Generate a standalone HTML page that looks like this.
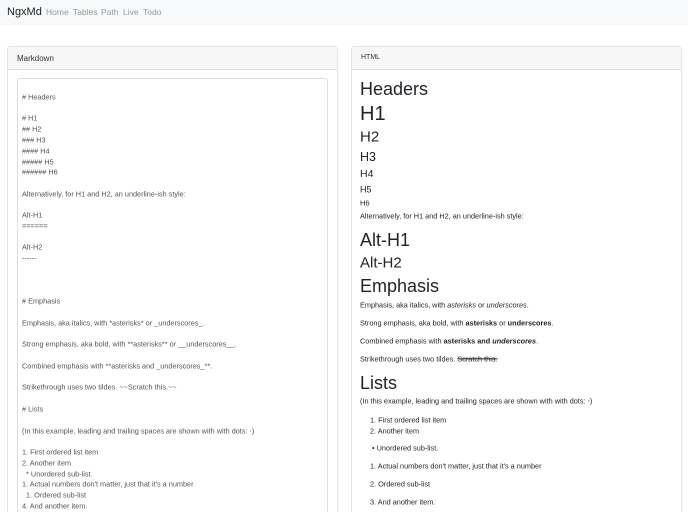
<!DOCTYPE html>
<html style="width:688px;height:512px;overflow:hidden"><head><meta charset="utf-8"><style>
*{margin:0;padding:0;box-sizing:border-box}
body{width:688px;height:512px;overflow:hidden;background:#fff;font-family:"Liberation Sans",sans-serif;color:#212529;position:relative}
#w{position:absolute;left:0;top:0;width:688px;height:512px;overflow:hidden}
.nav{position:absolute;left:0;top:0;width:688px;height:26px;background:#f8f9fa}
.nav .b{position:absolute;left:7px;top:6px;font-size:11px;color:#222}
.nav .l{position:absolute;top:7px;font-size:8.5px;color:#999}
.card{position:absolute;top:46px;width:331px;height:480px;border:1px solid #e3e3e3;border-radius:3px}
.hd{height:23px;background:#f7f7f7;border-bottom:1px solid #e3e3e3;font-size:8px;padding:7px 9px;color:#333}
.ta{position:absolute;left:17px;top:78px;width:311px;height:450px;border:1px solid #ddd;border-radius:3px}
.t{position:absolute;white-space:nowrap;line-height:1;transform:translateY(-50%)}
.L{left:22px;font-size:7.3px;color:#555}
.R{left:360px;color:#212529}
.p{font-size:7.3px}
.n{left:370px;font-size:7.3px}
</style></head><body><div id="w">
<div class="nav"><span class="b">NgxMd</span>
<span class="l" style="left:46px">Home</span><span class="l" style="left:73px">Tables</span><span class="l" style="left:101px">Path</span><span class="l" style="left:123px">Live</span><span class="l" style="left:143px">Todo</span></div>
<div class="card" style="left:7px"><div class="hd">Markdown</div></div>
<div class="card" style="left:351px"><div class="hd" style="font-size:7px">HTML</div></div>
<div class="ta"></div>

<div class="t L" style="top:97px"># Headers</div>
<div class="t L" style="top:118px"># H1</div>
<div class="t L" style="top:129px">## H2</div>
<div class="t L" style="top:140px">### H3</div>
<div class="t L" style="top:151px">#### H4</div>
<div class="t L" style="top:162px">##### H5</div>
<div class="t L" style="top:172px">###### H6</div>
<div class="t L" style="top:194px">Alternatively, for H1 and H2, an underline-ish style:</div>
<div class="t L" style="top:215px">Alt-H1</div>
<div class="t L" style="top:226px">======</div>
<div class="t L" style="top:247px">Alt-H2</div>
<div class="t L" style="top:258px">------</div>
<div class="t L" style="top:301px"># Emphasis</div>
<div class="t L" style="top:323px">Emphasis, aka italics, with *asterisks* or _underscores_.</div>
<div class="t L" style="top:344px">Strong emphasis, aka bold, with **asterisks** or __underscores__.</div>
<div class="t L" style="top:366px">Combined emphasis with **asterisks and _underscores_**.</div>
<div class="t L" style="top:387px">Strikethrough uses two tildes. ~~Scratch this.~~</div>
<div class="t L" style="top:409px"># Lists</div>
<div class="t L" style="top:431px">(In this example, leading and trailing spaces are shown with with dots: ⋅)</div>
<div class="t L" style="top:452px">1. First ordered list item</div>
<div class="t L" style="top:463px">2. Another item</div>
<div class="t L" style="top:474px">&nbsp;&nbsp;* Unordered sub-list.</div>
<div class="t L" style="top:484px">1. Actual numbers don't matter, just that it's a number</div>
<div class="t L" style="top:495px">&nbsp;&nbsp;1. Ordered sub-list</div>
<div class="t L" style="top:506px">4. And another item.</div>

<div class="t R" style="top:89px;font-size:18px">Headers</div>
<div class="t R" style="top:114px;font-size:20px">H1</div>
<div class="t R" style="top:137px;font-size:15px">H2</div>
<div class="t R" style="top:157px;font-size:12.5px">H3</div>
<div class="t R" style="top:174px;font-size:10.5px">H4</div>
<div class="t R" style="top:190px;font-size:9px">H5</div>
<div class="t R" style="top:203px;font-size:7.5px">H6</div>
<div class="t R p" style="top:216px">Alternatively, for H1 and H2, an underline-ish style:</div>
<div class="t R" style="top:240px;font-size:18px">Alt-H1</div>
<div class="t R" style="top:263px;font-size:15px">Alt-H2</div>
<div class="t R" style="top:286px;font-size:18px">Emphasis</div>
<div class="t R p" style="top:305px">Emphasis, aka italics, with <i>asterisks</i> or <i>underscores</i>.</div>
<div class="t R p" style="top:323px">Strong emphasis, aka bold, with <b>asterisks</b> or <b>underscores</b>.</div>
<div class="t R p" style="top:341px">Combined emphasis with <b>asterisks and <i>underscores</i></b>.</div>
<div class="t R p" style="top:359px">Strikethrough uses two tildes. <s>Scratch this.</s></div>
<div class="t R" style="top:383px;font-size:18px">Lists</div>
<div class="t R p" style="top:401px">(In this example, leading and trailing spaces are shown with with dots: ⋅)</div>
<div class="t n" style="top:420px">1. First ordered list item</div>
<div class="t n" style="top:431px">2. Another item</div>
<div class="t n" style="top:448px">&nbsp;• Unordered sub-list.</div>
<div class="t n" style="top:466px">1. Actual numbers don't matter, just that it's a number</div>
<div class="t n" style="top:484px">2. Ordered sub-list</div>
<div class="t n" style="top:502px">3. And another item.</div>
</div></body></html>
